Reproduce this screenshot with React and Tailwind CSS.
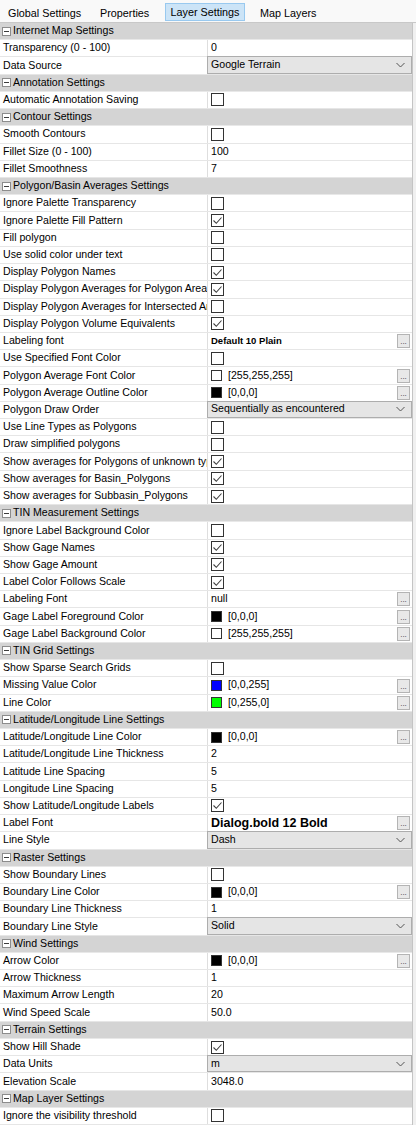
import React from "react";

const ROWS = [
  { h: "Internet Map Settings" },
  { l: "Transparency (0 - 100)", t: "0" },
  { l: "Data Source", d: "Google Terrain" },
  { h: "Annotation Settings" },
  { l: "Automatic Annotation Saving", c: false },
  { h: "Contour Settings" },
  { l: "Smooth Contours", c: false },
  { l: "Fillet Size (0 - 100)", t: "100" },
  { l: "Fillet Smoothness", t: "7" },
  { h: "Polygon/Basin Averages Settings" },
  { l: "Ignore Palette Transparency", c: false },
  { l: "Ignore Palette Fill Pattern", c: true },
  { l: "Fill polygon", c: false },
  { l: "Use solid color under text", c: false },
  { l: "Display Polygon Names", c: true },
  { l: "Display Polygon Averages for Polygon Area", c: true },
  { l: "Display Polygon Averages for Intersected Areas", c: false },
  { l: "Display Polygon Volume Equivalents", c: true },
  { l: "Labeling font", f: "Default 10 Plain", fs: "small" },
  { l: "Use Specified Font Color", c: false },
  { l: "Polygon Average Font Color", col: "#ffffff", ct: "[255,255,255]" },
  { l: "Polygon Average Outline Color", col: "#000000", ct: "[0,0,0]" },
  { l: "Polygon Draw Order", d: "Sequentially as encountered" },
  { l: "Use Line Types as Polygons", c: false },
  { l: "Draw simplified polygons", c: false },
  { l: "Show averages for Polygons of unknown type", c: true },
  { l: "Show averages for Basin_Polygons", c: true },
  { l: "Show averages for Subbasin_Polygons", c: true },
  { h: "TIN Measurement Settings" },
  { l: "Ignore Label Background Color", c: false },
  { l: "Show Gage Names", c: true },
  { l: "Show Gage Amount", c: true },
  { l: "Label Color Follows Scale", c: true },
  { l: "Labeling Font", f: "null" },
  { l: "Gage Label Foreground Color", col: "#000000", ct: "[0,0,0]" },
  { l: "Gage Label Background Color", col: "#ffffff", ct: "[255,255,255]" },
  { h: "TIN Grid Settings" },
  { l: "Show Sparse Search Grids", c: false },
  { l: "Missing Value Color", col: "#0000ff", ct: "[0,0,255]" },
  { l: "Line Color", col: "#00ff00", ct: "[0,255,0]" },
  { h: "Latitude/Longitude Line Settings" },
  { l: "Latitude/Longitude Line Color", col: "#000000", ct: "[0,0,0]" },
  { l: "Latitude/Longitude Line Thickness", t: "2" },
  { l: "Latitude Line Spacing", t: "5" },
  { l: "Longitude Line Spacing", t: "5" },
  { l: "Show Latitude/Longitude Labels", c: true },
  { l: "Label Font", f: "Dialog.bold 12 Bold", fs: "big" },
  { l: "Line Style", d: "Dash" },
  { h: "Raster Settings" },
  { l: "Show Boundary Lines", c: false },
  { l: "Boundary Line Color", col: "#000000", ct: "[0,0,0]" },
  { l: "Boundary Line Thickness", t: "1" },
  { l: "Boundary Line Style", d: "Solid" },
  { h: "Wind Settings" },
  { l: "Arrow Color", col: "#000000", ct: "[0,0,0]" },
  { l: "Arrow Thickness", t: "1" },
  { l: "Maximum Arrow Length", t: "20" },
  { l: "Wind Speed Scale", t: "50.0" },
  { h: "Terrain Settings" },
  { l: "Show Hill Shade", c: true },
  { l: "Data Units", d: "m" },
  { l: "Elevation Scale", t: "3048.0" },
  { h: "Map Layer Settings" },
  { l: "Ignore the visibility threshold", c: false },
];

function Minus() {
  return (
    <span className="w-[9px] h-[9px] border border-[#8c8c8c] bg-white flex items-center justify-center mr-[2px] shrink-0">
      <span className="w-[5px] h-[1px] bg-[#3c3c3c]" />
    </span>
  );
}

function Check({ on }) {
  return (
    <span className="w-[13px] h-[13px] border border-[#333333] bg-white flex items-center justify-center shrink-0">
      {on && (
        <svg width="11" height="11" viewBox="0 0 11 11">
          <path d="M1.5 5.5 L4.3 8.3 L9.5 2.5" fill="none" stroke="#3f3f3f" strokeWidth="1.1" />
        </svg>
      )}
    </span>
  );
}

function Dots() {
  return (
    <span className="absolute right-[2px] bottom-[1px] w-[13px] h-[14px] border border-[#b4b4b4] bg-[#e8e8e8] flex items-end justify-center text-[8px] leading-[8px] text-[#333] pb-[1px]">
      ...
    </span>
  );
}

function Value({ r }) {
  if (r.t !== undefined) return <span className="pl-[3px]">{r.t}</span>;
  if (r.c !== undefined)
    return (
      <span className="pl-[3px] flex items-center h-full">
        <Check on={r.c} />
      </span>
    );
  if (r.d !== undefined)
    return (
      <span className="absolute left-[-1px] right-0 top-[-1px] bottom-0 bg-[#e5e5e5] border border-[#adadad] flex items-center pl-[3px]">
        <span className="flex-1">{r.d}</span>
        <svg width="9" height="6" viewBox="0 0 9 6" className="mr-[6px]">
          <path d="M0.5 1 L4.5 5 L8.5 1" fill="none" stroke="#555" strokeWidth="1" />
        </svg>
      </span>
    );
  if (r.col !== undefined)
    return (
      <>
        <span className="pl-[3px] flex items-center h-full">
          <span className="w-[11px] h-[11px] border border-[#333]" style={{ backgroundColor: r.col }} />
          <span className="ml-[6px]">{r.ct}</span>
        </span>
        <Dots />
      </>
    );
  if (r.f !== undefined)
    return (
      <>
        <span
          className={
            "pl-[3px] " +
            (r.fs === "small"
              ? "font-bold text-[9.5px]"
              : r.fs === "big"
              ? "font-bold text-[12.5px]"
              : "")
          }
        >
          {r.f}
        </span>
        <Dots />
      </>
    );
  return null;
}

export default function App() {
  return (
    <div
      className="w-[416px] h-[1125px] overflow-hidden bg-[#f0f0f0] text-black text-[10.6px]"
      style={{ fontFamily: '"Liberation Sans", Arial, sans-serif' }}
    >
      <div className="h-[23px] bg-[#f9f9f9] border-b border-[#c8c8c8] flex items-center text-[10.8px] relative">
        <span className="absolute left-[8px] top-[5px]">Global Settings</span>
        <span className="absolute left-[100px] top-[5px]">Properties</span>
        <span className="absolute left-[165px] top-[3px] w-[80px] h-[18px] bg-[#cce4f7] border border-[#99c9ef] flex items-center justify-center">
          Layer Settings
        </span>
        <span className="absolute left-[260px] top-[5px]">Map Layers</span>
      </div>
      <div className="w-[413px] border-r border-[#c4c4c4] bg-white">
        {ROWS.map((r, i) =>
          r.h ? (
            <div
              key={i}
              className="h-[17.22px] bg-[#d4d4d4] border-b border-[#e8e8e8] flex items-center pl-[2px] whitespace-nowrap"
            >
              <Minus />
              <span>{r.h}</span>
            </div>
          ) : (
            <div key={i} className="h-[17.22px] flex border-b border-[#e6e6e6]">
              <div className="w-[208px] shrink-0 border-r border-[#dedede] pl-[3px] overflow-hidden whitespace-nowrap flex items-center">
                {r.l}
              </div>
              <div className="flex-1 relative flex items-center whitespace-nowrap">
                <Value r={r} />
              </div>
            </div>
          )
        )}
      </div>
    </div>
  );
}
